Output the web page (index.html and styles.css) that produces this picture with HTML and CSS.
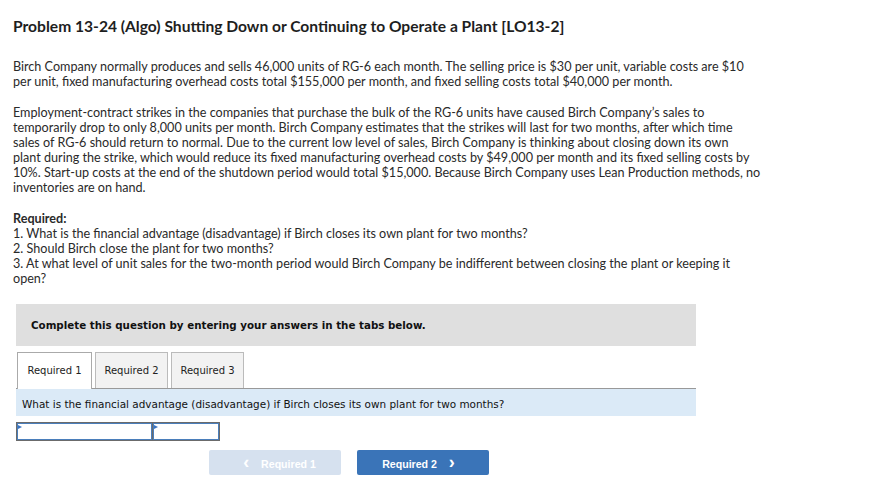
FILE: index.html
```html
<!DOCTYPE html>
<html>
<head>
<meta charset="utf-8">
<link rel="stylesheet" href="styles.css">
</head>
<body>
<div class="page">
  <h1 class="title">Problem 13-24 (Algo) Shutting Down or Continuing to Operate a Plant [LO13-2]</h1>
  <p class="para">Birch Company normally produces and sells 46,000 units of RG-6 each month. The selling price is $30 per unit, variable costs are $10 per unit, fixed manufacturing overhead costs total $155,000 per month, and fixed selling costs total $40,000 per month.</p>
  <p class="para">Employment-contract strikes in the companies that purchase the bulk of the RG-6 units have caused Birch Company’s sales to temporarily drop to only 8,000 units per month. Birch Company estimates that the strikes will last for two months, after which time sales of RG-6 should return to normal. Due to the current low level of sales, Birch Company is thinking about closing down its own<br>plant during the strike, which would reduce its fixed manufacturing overhead costs by $49,000 per month and its fixed selling costs by 10%. Start-up costs at the end of the shutdown period would total $15,000. Because Birch Company uses Lean Production methods, no inventories are on hand.</p>
  <div class="req">
    <div class="req-head">Required:</div>
    <div>1. What is the financial advantage (disadvantage) if Birch closes its own plant for two months?</div>
    <div>2. Should Birch close the plant for two months?</div>
    <div>3. At what level of unit sales for the two-month period would Birch Company be indifferent between closing the plant or keeping it open?</div>
  </div>

  <div class="panel">
    <div class="banner">Complete this question by entering your answers in the tabs below.</div>
    <div class="tabs">
      <div class="tab active">Required 1</div>
      <div class="tab">Required 2</div>
      <div class="tab">Required 3</div>
    </div>
    <div class="question">What is the financial advantage (disadvantage) if Birch closes its own plant for two months?</div>
    <div class="answer">
      <div class="cell wide"></div>
      <div class="cell narrow"></div>
    </div>
    <div class="nav">
      <button class="btn prev"><span class="chev">&lsaquo;</span> Required 1</button>
      <button class="btn next">Required 2 <span class="chev">&rsaquo;</span></button>
    </div>
  </div>
</div>
</body>
</html>
```
FILE: styles.css
```css
html, body {
  margin: 0;
  padding: 0;
  background: #fff;
}
.page {
  padding: 16px 0 0 13px;
  font-family: Lato, "Liberation Sans", sans-serif;
  color: #222;
}
.title {
  font-size: 15.6px;
  font-weight: 700;
  margin: 0 0 23px 0;
  line-height: 20px;
  color: #1e1e1e;
}
.para {
  font-size: 12.6px;
  line-height: 15px;
  margin: 0 0 16px 0;
  width: 748px;
  color: #2a2a2a;
}
.req {
  font-size: 12.6px;
  line-height: 15px;
  width: 748px;
  color: #2a2a2a;
  margin-top: 12px;
}
.req-head {
  font-weight: 700;
}
.panel {
  margin: 18px 0 0 3px;
  width: 680px;
  font-family: "DejaVu Sans", Verdana, sans-serif;
}
.banner {
  background: #dfdfdf;
  height: 42px;
  line-height: 36px;
  box-sizing: border-box;
  padding: 3px 0 0 15px;
  font-size: 10.3px;
  font-weight: 700;
  color: #111;
}
.tabs {
  display: flex;
  gap: 3px;
  margin-top: 6px;
  padding-left: 1px;
  border-bottom: 1px solid #999;
}
.tab {
  width: 73px;
  height: 36px;
  box-sizing: border-box;
  border: 1px solid #bbb;
  border-bottom: none;
  background: #f2f2f2;
  font-size: 10px;
  line-height: 36px;
  text-align: center;
  color: #222;
}
.tab.active {
  background: #fff;
  border-color: #aaa;
  width: 75px;
  height: 37px;
  margin-bottom: -1px;
}
.question {
  background: #dbeaf7;
  height: 27px;
  line-height: 30px;
  padding-left: 6px;
  font-size: 10.45px;
  color: #111;
}
.answer {
  display: flex;
  margin-top: 6px;
  width: 204px;
  height: 19px;
  border: 1px solid #6b6b6b;
  box-sizing: border-box;
  background: #6b6b6b;
  gap: 1px;
}
.cell {
  position: relative;
  background: #fff;
  border: 1px solid #4a7ebb;
  box-sizing: border-box;
  height: 17px;
}
.cell::before {
  content: "";
  position: absolute;
  left: 0;
  top: 1px;
  border-left: 4px solid #3b74c2;
  border-top: 2px solid transparent;
  border-bottom: 2px solid transparent;
}
.cell.wide { width: 135px; }
.cell.narrow { width: 66px; }
.nav {
  display: flex;
  gap: 16px;
  margin: 9px 0 0 193px;
}
.btn {
  width: 132px;
  height: 25px;
  border: none;
  border-radius: 2px;
  color: #fff;
  font-family: "Liberation Sans", Arial, sans-serif;
  font-weight: 700;
  font-size: 10.6px;
  padding: 0;
}
.btn.prev { background: #d6e1ef; }
.btn.next { background: #3a74b8; }
.chev {
  font-size: 18px;
  line-height: 12px;
  margin: 0 9px;
  position: relative;
  top: 0;
}
```
